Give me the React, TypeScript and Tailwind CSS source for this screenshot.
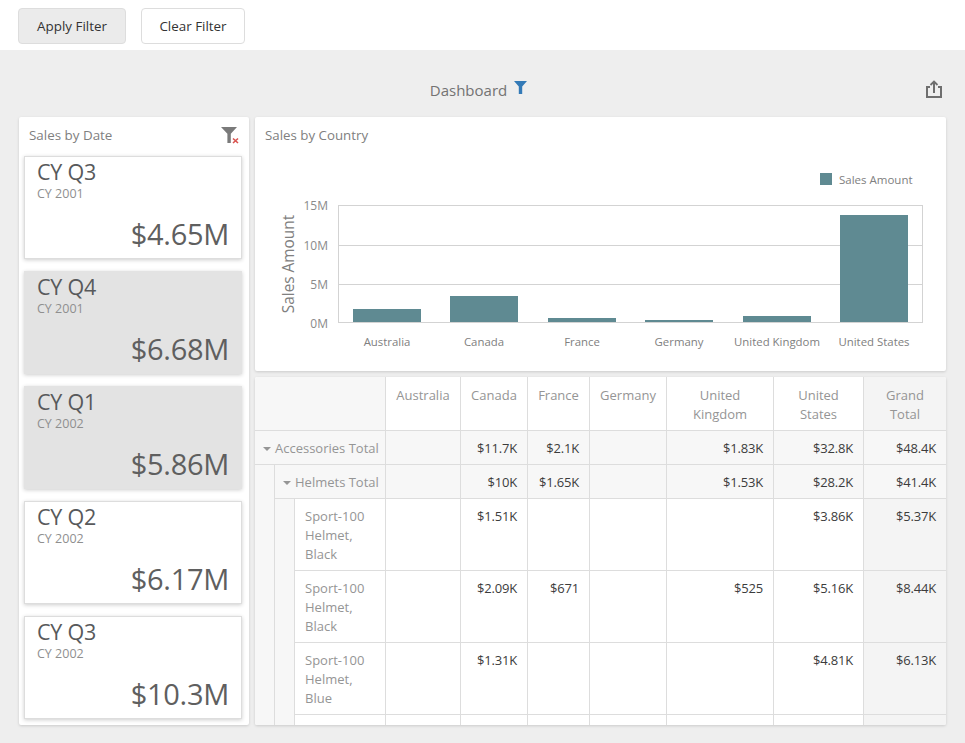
import type { ReactNode } from "react"

const font = "font-['Open_Sans','Liberation_Sans',sans-serif]"

const cards = [
    { q: "CY Q3", y: "CY 2001", v: "$4.65M", on: false },
    { q: "CY Q4", y: "CY 2001", v: "$6.68M", on: true },
    { q: "CY Q1", y: "CY 2002", v: "$5.86M", on: true },
    { q: "CY Q2", y: "CY 2002", v: "$6.17M", on: false },
    { q: "CY Q3", y: "CY 2002", v: "$10.3M", on: false },
]

const bars = [
    { name: "Australia", x: 353, top: 309 },
    { name: "Canada", x: 450, top: 296 },
    { name: "France", x: 548, top: 318 },
    { name: "Germany", x: 645, top: 320 },
    { name: "United Kingdom", x: 743, top: 316 },
    { name: "United States", x: 840, top: 215 },
]

const rows = [
    { name: ["Sport-100", "Helmet,", "Black"], vals: ["", "$1.51K", "", "", "", "$3.86K", "$5.37K"] },
    { name: ["Sport-100", "Helmet,", "Black"], vals: ["", "$2.09K", "$671", "", "$525", "$5.16K", "$8.44K"] },
    { name: ["Sport-100", "Helmet,", "Blue"], vals: ["", "$1.31K", "", "", "", "$4.81K", "$6.13K"] },
    { name: [], vals: ["", "", "", "", "", "", ""] },
]

function Card({ q, y, v, on }: { q: string; y: string; v: string; on: boolean }) {
    return (
        <div className={`h-[103px] flex flex-col shadow-[0_1px_4px_rgba(0,0,0,0.2)] ${on ? "bg-[#e3e3e3] px-[13px]" : "bg-white border border-[#dddddd] px-[12px]"}`}>
            <div className={`text-[21.5px] leading-[30px] text-[#58595b] tracking-[-0.2px] ${on ? "pt-px" : ""}`}>{q}</div>
            <div className="text-[12.5px] leading-[14px] text-[#8f8f8f]">{y}</div>
            <div className={`mt-auto text-right text-[29px] leading-[40px] text-[#5f5f5f] tracking-[-0.3px] ${on ? "mb-[5px]" : "mb-[4px]"}`}>{v}</div>
        </div>
    )
}

function Head({ children, total }: { children: ReactNode; total?: boolean }) {
    return (
        <div className={`border-b border-[#dddddd] px-[10px] pt-[9px] text-center text-[13px] leading-[19px] text-[#959595] ${total ? "bg-[#f4f4f4]" : "bg-white border-r"}`}>
            {children}
        </div>
    )
}

function Val({ children, bg, last }: { children?: ReactNode; bg: string; last?: boolean }) {
    return (
        <div className={`border-b border-[#dddddd] px-[10px] pt-[8px] text-right text-[13px] leading-[19px] text-[#3c3c3c] tracking-[-0.2px] ${last ? "" : "border-r"} ${bg}`}>
            {children}
        </div>
    )
}

function Caret() {
    return <span className="mr-[4px] inline-block align-[2px] w-0 h-0 border-x-4 border-x-transparent border-t-[4px] border-t-[#959595]" />
}

function BarChart() {
    return (
        // svg origin sits at page x=255, y=117
        <svg width="691" height="254" viewBox="255 117 691 254" className="block absolute left-0 top-0" fontFamily="'Open Sans', sans-serif">
            <rect x="820" y="173" width="12" height="12" fill="#5f8a92" />
            <text x="839" y="184" fontSize="11.5" fill="#808080">Sales Amount</text>
            <rect x="338.5" y="205.5" width="584" height="117" fill="none" stroke="#d3d3d3" />
            <line x1="338" x2="923" y1="245.5" y2="245.5" stroke="#d3d3d3" />
            <line x1="338" x2="923" y1="284.5" y2="284.5" stroke="#d3d3d3" />
            {["15M", "10M", "5M", "0M"].map((t, i) => (
                <text key={t} x="328" y={[210, 250, 289, 328][i]} textAnchor="end" fontSize="12" fill="#8a8a8a">{t}</text>
            ))}
            <text transform="translate(294 264) rotate(-90)" textAnchor="middle" fontSize="15.4" fill="#808080">Sales Amount</text>
            {bars.map(b => (
                <g key={b.name}>
                    <rect x={b.x} y={b.top} width="68" height={322 - b.top} fill="#5f8a92" />
                    <text x={b.x + 34} y="346" textAnchor="middle" fontSize="11.4" fill="#808080">{b.name}</text>
                </g>
            ))}
        </svg>
    )
}

export default function App() {
    return (
        <div className={`${font} h-[743px] w-[965px] overflow-hidden bg-[#eeeeee]`}>
            <div className="h-[50px] bg-white flex items-start gap-[15px] pl-[18px] pt-[8px]">
                <button className="h-[36px] w-[108px] pt-px rounded-[4px] bg-[#ebebeb] border border-[#dddddd] text-[13.4px] text-[#333333]">Apply Filter</button>
                <button className="h-[36px] w-[104px] pt-px rounded-[4px] bg-white border border-[#dddddd] text-[13.4px] text-[#333333]">Clear Filter</button>
            </div>

            <div className="relative h-[67px]">
                <div className="flex justify-center pr-[8px] pt-[30px]">
                    <span className="text-[15px] leading-[21px] text-[#737373]">Dashboard</span>
                    <svg width="13" height="13" viewBox="0 0 13 13" className="ml-[7px] mt-px">
                        <path d="M0 0H13L8.2 5.5V13H4.8V5.5Z" fill="#337ab7" />
                    </svg>
                </div>
                <svg width="18" height="19" viewBox="0 0 18 19" className="absolute left-[925px] top-[30px]" fill="none" stroke="#6e6e6e" strokeWidth="2">
                    <path d="M5 7H2V17H16V7H13" />
                    <path d="M9 13V2" />
                    <path d="M5.5 5L9 1.5L12.5 5" strokeWidth="1.8" />
                </svg>
            </div>

            <div className="flex gap-[6px] pl-[19px]">
                <div className="w-[230px] h-[608px] bg-white rounded-[2px] shadow-[0_1px_3px_rgba(0,0,0,0.15)] pl-[5px] pr-[7px]">
                    <div className="h-[39px] flex items-start justify-between pl-[5px] pt-[9px]">
                        <span className="text-[13.4px] leading-[18px] text-[#808080]">Sales by Date</span>
                        <svg width="18" height="17" viewBox="0 0 18 17" className="mr-[3px] mt-px">
                            <path d="M0 0H16L9.8 6.8V16H6.4V6.8Z" fill="#7a7a7a" />
                            <path d="M12 11.5L17 16M17 11.5L12 16" stroke="#d9534f" strokeWidth="1.6" />
                        </svg>
                    </div>
                    <div className="flex flex-col gap-[12px]">
                        {cards.map((c, i) => <Card key={i} {...c} />)}
                    </div>
                </div>

                <div className="w-[691px] flex flex-col gap-[6px]">
                    <div className="relative h-[254px] bg-white rounded-[2px] shadow-[0_1px_3px_rgba(0,0,0,0.15)]">
                        <BarChart />
                        <div className="relative pl-[10px] pt-[9px] text-[13.3px] leading-[18px] text-[#808080]">Sales by Country</div>
                    </div>

                    <div className="h-[348px] overflow-hidden rounded-[2px] shadow-[0_1px_3px_rgba(0,0,0,0.15)] bg-white grid grid-cols-[20px_20px_91px_75px_67px_62px_77px_107px_90px_82px] grid-rows-[54px_34px_34px_72px_72px_72px_72px]">
                        <div className="col-span-3 bg-[#f7f7f7] border-b border-r border-[#dddddd]" />
                        <Head>Australia</Head>
                        <Head>Canada</Head>
                        <Head>France</Head>
                        <Head>Germany</Head>
                        <Head>United Kingdom</Head>
                        <Head>United States</Head>
                        <Head total>Grand Total</Head>

                        <div className="col-span-3 bg-[#f7f7f7] border-b border-r border-[#dddddd] pl-[8px] pt-[8px] text-[13px] leading-[19px] text-[#959595] whitespace-nowrap"><Caret />Accessories Total</div>
                        {["", "$11.7K", "$2.1K", "", "$1.83K", "$32.8K", "$48.4K"].map((v, i) => <Val key={i} bg="bg-[#f7f7f7]" last={i === 6}>{v}</Val>)}

                        <div className="row-span-5 bg-[#f7f7f7] border-r border-[#dddddd]" />
                        <div className="col-span-2 bg-[#f7f7f7] border-b border-r border-[#dddddd] pl-[8px] pt-[8px] text-[13px] leading-[19px] text-[#959595] whitespace-nowrap"><Caret />Helmets Total</div>
                        {["", "$10K", "$1.65K", "", "$1.53K", "$28.2K", "$41.4K"].map((v, i) => <Val key={i} bg="bg-[#f7f7f7]" last={i === 6}>{v}</Val>)}

                        <div className="row-span-4 bg-[#f7f7f7] border-r border-[#dddddd]" />
                        {rows.map((r, i) => (
                            <div key={i} className="contents">
                                <div className="bg-white border-b border-r border-[#dddddd] pl-[10px] pt-[8px] text-[13px] leading-[19px] text-[#959595]">
                                    {r.name.map(n => <div key={n}>{n}</div>)}
                                </div>
                                {r.vals.map((v, j) => <Val key={j} bg={j === 6 ? "bg-[#f4f4f4]" : "bg-white"} last={j === 6}>{v}</Val>)}
                            </div>
                        ))}
                    </div>
                </div>
            </div>
        </div>
    )
}
